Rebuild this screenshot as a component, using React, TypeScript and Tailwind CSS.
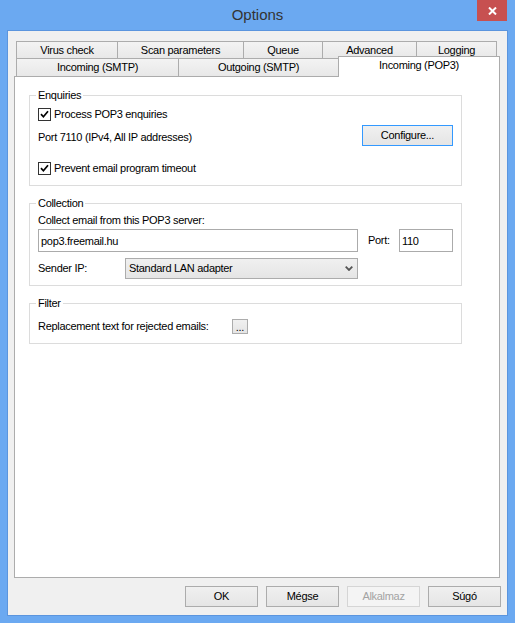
import type { ReactNode } from "react";

function CheckBox({ label }: { label: string }) {
  return (
    <label className="flex h-[13px] items-center gap-[3px] leading-[13px]">
      <span className="flex h-[13px] w-[13px] shrink-0 items-center justify-center border border-[#333333] bg-white">
        <svg width="9" height="9" viewBox="0 0 9 9">
          <path d="M1 4.2 L3.4 6.8 L8 1.2" stroke="#000" strokeWidth="1.7" fill="none" />
        </svg>
      </span>
      {label}
    </label>
  );
}

function Group({ title, children }: { title: string; children: ReactNode }) {
  return (
    <fieldset className="w-[433px] border border-[#dcdcdc] px-[8px]">
      <legend className="ml-[-2px] px-[2px] leading-[13px]">{title}</legend>
      {children}
    </fieldset>
  );
}

function Button({ label, disabled }: { label: string; disabled?: boolean }) {
  return (
    <button
      className={
        disabled
          ? "h-[21px] w-[73px] border border-[#d5d5d5] bg-[#f4f4f4] text-[#a3a3a3]"
          : "h-[21px] w-[73px] border border-[#acacac] bg-linear-to-b from-[#f0f0f0] to-[#e5e5e5] text-black"
      }
    >
      {label}
    </button>
  );
}

export default function App() {
  return (
    <div className="flex h-[623px] w-[515px] flex-col bg-[#6ba9f1] font-['Liberation_Sans',Arial,sans-serif] text-[11px] tracking-[-0.3px] text-black">
      {/* title bar */}
      <div className="grid h-[30px] grid-cols-[1fr_auto_1fr]">
        <div />
        <div className="self-center text-[15px] leading-[18px] tracking-normal text-[#333333]">Options</div>
        <div className="flex justify-end pr-[8px]">
          <div className="flex h-[21px] w-[30px] items-center justify-center bg-[#c75050]">
            <svg width="9" height="8" viewBox="0 0 9 8">
              <path d="M1 0.5 L8 7.5 M8 0.5 L1 7.5" stroke="#fff" strokeWidth="2" />
            </svg>
          </div>
        </div>
      </div>

      {/* client area */}
      <div className="mx-[7px] h-[586px] border border-[#5b95de] bg-[#f0f0f0] pt-[10px]">
        {/* tabs, top row */}
        <div className="ml-[8px] flex h-[17px]">
          <div className="flex w-[101px] items-center justify-center border-l border-t border-[#acacac] bg-linear-to-b from-[#f3f3f3] to-[#e8e8e8]">Virus check</div>
          <div className="flex w-[126px] items-center justify-center border-l border-t border-[#acacac] bg-linear-to-b from-[#f3f3f3] to-[#e8e8e8]">Scan parameters</div>
          <div className="flex w-[79px] items-center justify-center border-l border-t border-[#acacac] bg-linear-to-b from-[#f3f3f3] to-[#e8e8e8]">Queue</div>
          <div className="flex w-[94px] items-center justify-center border-l border-t border-[#acacac] bg-linear-to-b from-[#f3f3f3] to-[#e8e8e8]">Advanced</div>
          <div className="flex w-[81px] items-center justify-center border-x border-t border-[#acacac] bg-linear-to-b from-[#f3f3f3] to-[#e8e8e8]">Logging</div>
        </div>
        {/* tabs, bottom row */}
        <div className="ml-[8px] flex h-[18px] items-end">
          <div className="flex h-[18px] w-[162px] items-center justify-center border-l border-t border-[#acacac] bg-linear-to-b from-[#f3f3f3] to-[#e8e8e8]">Incoming (SMTP)</div>
          <div className="flex h-[18px] w-[160px] items-center justify-center border-l border-t border-[#acacac] bg-linear-to-b from-[#f3f3f3] to-[#e8e8e8]">Outgoing (SMTP)</div>
          <div className="relative z-10 mb-[-1px] flex h-[21px] w-[162px] items-center justify-center border-x border-t border-[#acacac] bg-white pb-[3px]">Incoming (POP3)</div>
        </div>

        {/* page */}
        <div className="ml-[6px] flex h-[502px] w-[486px] flex-col gap-[11px] border border-[#acacac] bg-white pl-[14px] pt-[12px]">
          <Group title="Enquiries">
            <div className="mt-[6px]">
              <CheckBox label="Process POP3 enquiries" />
            </div>
            <div className="mt-[4px] flex h-[21px] items-center justify-between">
              <span className="pt-[3px]">Port 7110 (IPv4, All IP addresses)</span>
              <button className="h-[21px] w-[91px] border border-[#3399ff] bg-linear-to-b from-[#f0f0f0] to-[#e5e5e5]">Configure...</button>
            </div>
            <div className="mt-[16px] pb-[10px]">
              <CheckBox label="Prevent email program timeout" />
            </div>
          </Group>

          <Group title="Collection">
            <p className="mt-[4px] leading-[13px]">Collect email from this POP3 server:</p>
            <div className="mt-[2px] flex items-center">
              <input
                readOnly
                defaultValue="pop3.freemail.hu"
                className="h-[23px] w-[320px] border border-[#ababab] px-[2px] outline-none"
              />
              <span className="ml-[10px]">Port:</span>
              <input
                readOnly
                defaultValue="110"
                className="ml-auto h-[23px] w-[54px] border border-[#ababab] px-[2px] outline-none"
              />
            </div>
            <div className="mt-[6px] flex items-center pb-[6px]">
              <span className="w-[87px]">Sender IP:</span>
              <div className="flex h-[21px] w-[233px] items-center justify-between border border-[#acacac] bg-linear-to-b from-[#f0f0f0] to-[#e5e5e5] pl-[3px] pr-[4px]">
                <span>Standard LAN adapter</span>
                <svg width="8" height="5" viewBox="0 0 8 5">
                  <path d="M0.7 0.7 L4 4 L7.3 0.7" stroke="#555" strokeWidth="1.8" fill="none" />
                </svg>
              </div>
            </div>
          </Group>

          <Group title="Filter">
            <div className="mt-[9px] flex h-[15px] items-center">
              <span className="w-[194px]">Replacement text for rejected emails:</span>
              <button className="flex h-[15px] w-[16px] items-end justify-center border border-[#acacac] bg-linear-to-b from-[#f0f0f0] to-[#e5e5e5] pb-[2px] leading-[8px]">
                ...
              </button>
            </div>
            <div className="h-[9px]" />
          </Group>
        </div>

        {/* dialog buttons */}
        <div className="mt-[8px] flex justify-end gap-[8px] pr-[6px]">
          <Button label="OK" />
          <Button label="Mégse" />
          <Button label="Alkalmaz" disabled />
          <Button label="Súgó" />
        </div>
      </div>
    </div>
  );
}
